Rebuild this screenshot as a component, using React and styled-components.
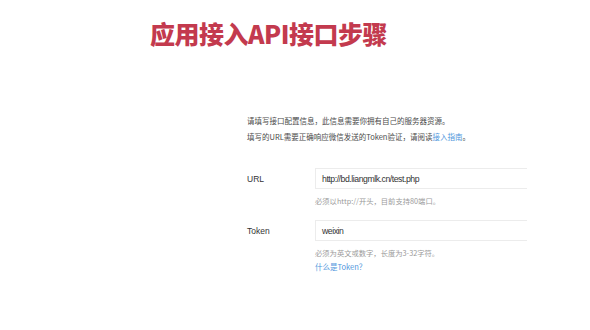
import React from 'react';
import styled, { createGlobalStyle } from 'styled-components';

const GlobalStyle = createGlobalStyle`
  html, body {
    margin: 0;
    padding: 0;
    background: #ffffff;
  }
`;

const Page = styled.div`
  width: 590px;
  height: 330px;
  overflow: hidden;
  background: #ffffff;
  font-family: "Liberation Sans", "Noto Sans CJK SC", sans-serif;
`;

const Title = styled.h1`
  margin: 18px 0 0 150px;
  font-family: "Noto Sans CJK SC", sans-serif;
  font-size: 25px;
  line-height: 30px;
  font-weight: 900;
  letter-spacing: -0.5px;
  color: #c33a4e;
`;

const Content = styled.div`
  padding-left: 247px;
`;

const Intro = styled.div`
  margin-top: 65px;
  font-family: "Noto Sans CJK SC", sans-serif;
  font-size: 7.5px;
  line-height: 16px;
  color: #4a4a4a;
`;

const Link = styled.a`
  color: #4f96dc;
  text-decoration: none;
`;

const Form = styled.div`
  margin-top: 23px;
  display: flex;
  flex-direction: column;
  gap: 12px;
`;

const Field = styled.div`
  display: grid;
  grid-template-columns: 68px 212px;
  align-items: center;
`;

const Label = styled.span`
  font-size: 8.5px;
  color: #333;
`;

const Input = styled.div`
  height: 21px;
  box-sizing: border-box;
  padding-left: 6px;
  display: flex;
  align-items: center;
  border: 1px solid #ececec;
  border-right: none;
  font-size: 8.7px;
  letter-spacing: -0.45px;
  color: #333;
`;

const Help = styled.div`
  grid-column: 2;
  margin-top: 5px;
  font-family: "Noto Sans CJK SC", sans-serif;
  font-size: 7.3px;
  line-height: 14px;
  color: #9a9a9a;
`;

const HelpLink = styled(Link)`
  display: block;
  font-size: 7.5px;
`;

export default function App() {
  return (
    <Page>
      <GlobalStyle />
      <Title>应用接入API接口步骤</Title>
      <Content>
        <Intro>
          <div>请填写接口配置信息，此信息需要你拥有自己的服务器资源。</div>
          <div>
            填写的URL需要正确响应微信发送的Token验证，请阅读<Link href="#">接入指南</Link>。
          </div>
        </Intro>
        <Form>
          <Field>
            <Label>URL</Label>
            <Input>http://bd.liangmlk.cn/test.php</Input>
            <Help>必须以http://开头，目前支持80端口。</Help>
          </Field>
          <Field>
            <Label>Token</Label>
            <Input>weixin</Input>
            <Help>
              必须为英文或数字，长度为3-32字符。
              <HelpLink href="#">什么是Token？</HelpLink>
            </Help>
          </Field>
        </Form>
      </Content>
    </Page>
  );
}
